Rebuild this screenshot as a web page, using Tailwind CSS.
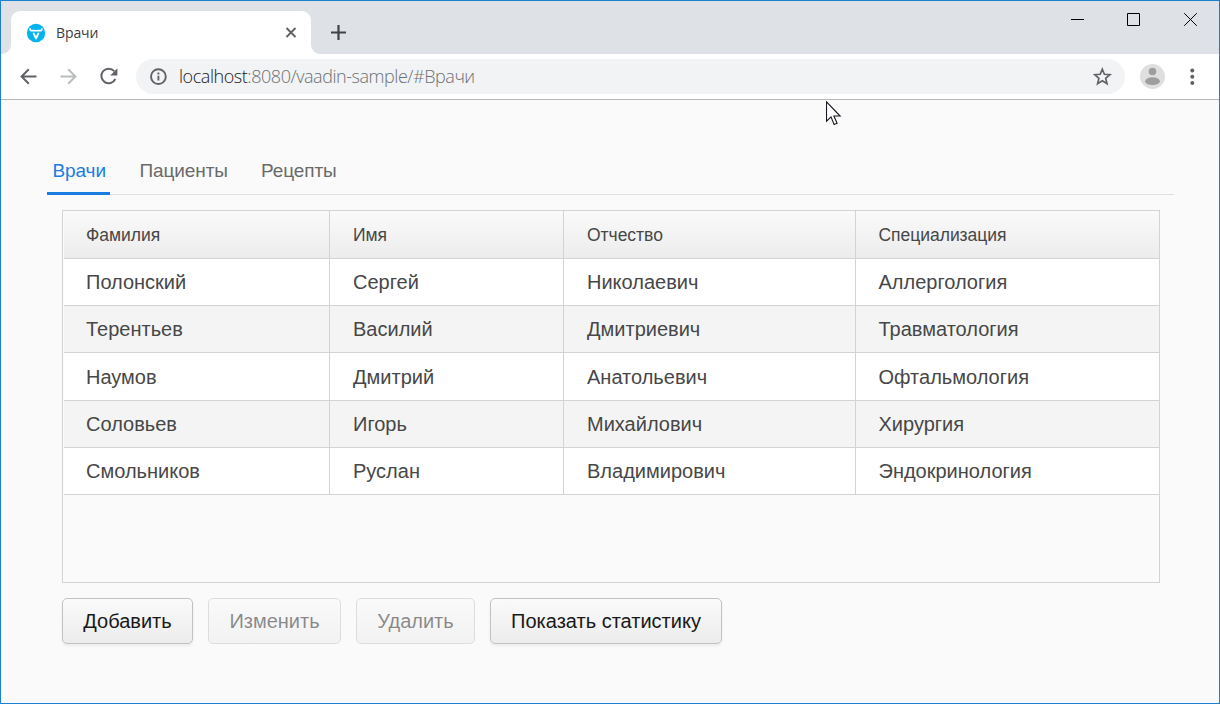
<!DOCTYPE html>
<html lang="ru">
<head>
<meta charset="utf-8">
<title>Врачи</title>
<script src="https://cdn.jsdelivr.net/npm/@tailwindcss/browser@4"></script>
</head>
<body class="w-[1220px] h-[704px] overflow-hidden">
<div class="relative flex flex-col w-[1220px] h-[704px] border border-[#1a80d0] bg-[#fafafa] font-['Liberation_Sans',Arial,sans-serif]">
  <!-- Tab strip -->
  <header class="flex h-[53px] bg-[#dee1e6] shrink-0">
    <div class="w-[10px] flex items-end bg-white"><div class="w-full h-full bg-[#dee1e6] rounded-br-[9px]"></div></div>
    <div class="w-[300px] mt-[10px] bg-white rounded-t-[9px] flex items-center pl-[15px] pr-[12px] font-['Open_Sans','Noto_Sans',sans-serif]">
      <svg class="w-5 h-5" viewBox="0 0 20 20"><circle cx="10" cy="10" r="9.200" fill="#00b4f0"/><path d="M4.200 5.200v1.400q0 1 1 1H8.800Q10 7.600 10 8.600Q10 7.600 11.200 7.600h3.600q1 0 1-1V5.200" fill="none" stroke="#fff" stroke-width="1.700"/><path d="M7.700 10.600l2.300 4.800 2.300-4.800" fill="none" stroke="#fff" stroke-width="2" stroke-linecap="round" stroke-linejoin="round"/></svg>
      <span class="ml-[10px] text-[14px] leading-5 tracking-[-0.1px] text-[#3c4043] font-normal grow">Врачи</span>
      <svg class="w-4 h-4" viewBox="0 0 16 16"><path d="M3.500 3l9 9M12.500 3l-9 9" stroke="#5f6368" stroke-width="1.900"/></svg>
    </div>
    <div class="grow bg-white"><div class="h-full bg-[#dee1e6] rounded-bl-[9px] flex">
      <svg class="w-4 h-4 ml-[20px] mt-[23px]" viewBox="0 0 16 16"><path d="M7.500 1v15M0 8.500h15" stroke="#3f4246" stroke-width="2.200"/></svg>
      <div class="grow"></div>
      <svg class="w-[13px] h-[13px] mt-3 mr-[43px]" viewBox="0 0 13 13"><path d="M0 6.500h13" stroke="#000"/></svg>
      <svg class="w-[13px] h-[13px] mt-3 mr-[44px]" viewBox="0 0 13 13"><path d="M.5.5h12v12H.5z" fill="none" stroke="#000"/></svg>
      <svg class="w-[13px] h-[13px] mt-3 mr-[22px]" viewBox="0 0 13 13"><path d="M.2.2l12.600 12.600M12.800.2L.2 12.800" stroke="#000" stroke-width="1"/></svg>
    </div></div>
  </header>
  <!-- Toolbar -->
  <nav class="h-[46px] shrink-0 bg-white border-b border-[#b5b6b5] flex items-center pl-4 pr-4">
    <svg class="w-6 h-6" viewBox="0 0 24 24" fill="none" stroke="#5f6368" stroke-width="2"><path d="M19.500 11.500H4.800M11.800 4.300L4.600 11.500l7.200 7.200"/></svg>
    <svg class="w-6 h-6 ml-4" viewBox="0 0 24 24" fill="none" stroke="#babcbe" stroke-width="2"><path d="M3.500 11.500h14.700M11.200 4.300l7.200 7.200-7.200 7.200"/></svg>
    <svg class="w-6 h-6 ml-4" viewBox="0 0 24 24"><path d="M17.200 6.200A7.300 7.300 0 1 0 18.300 14" fill="none" stroke="#5f6368" stroke-width="2"/><path d="M20.400 3.200v7.200h-7.200z" fill="#5f6368"/></svg>
    <div class="ml-[15px] w-[989px] h-[35px] bg-[#f1f3f4] rounded-full flex items-center pl-[13px] pr-[12px]">
      <svg class="w-[18px] h-[18px]" viewBox="0 0 18 18"><circle cx="9.400" cy="8.600" r="7.400" fill="none" stroke="#5f6368" stroke-width="1.900"/><path d="M9.400 7.700v4.900M9.400 4.500v1.900" stroke="#5f6368" stroke-width="1.900"/></svg>
      <span class="ml-[12px] -mt-px text-[18px] leading-6 tracking-[-0.45px] grow font-[350] text-[#6c7176] font-['Open_Sans','Noto_Sans',sans-serif]"><span class="text-[#18191d]">localhost</span>:8080/vaadin-sample/#Врачи</span>
      <svg class="w-5 h-5" viewBox="0 0 20 20"><path d="M9.300 2.200l2.100 5.100 5.500.4-4.200 3.600 1.300 5.400-4.700-2.900-4.700 2.900 1.300-5.400-4.200-3.600 5.500-.4z" fill="none" stroke="#5f6368" stroke-width="1.700"/></svg>
    </div>
    <svg class="w-[25px] h-[25px] ml-[15px]" viewBox="0 0 25 25"><circle cx="12.500" cy="12.500" r="12.500" fill="#dfdfdf"/><circle cx="12.500" cy="7.500" r="3.800" fill="#9e9e9e"/><ellipse cx="12.500" cy="17.200" rx="7.400" ry="3.900" fill="#9e9e9e"/></svg>
    <svg class="w-[6px] h-[18px] ml-[24px]" viewBox="0 0 6 18" fill="#5f6368"><circle cx="3.300" cy="2.400" r="2"/><circle cx="3.300" cy="8.700" r="2"/><circle cx="3.300" cy="14.900" r="2"/></svg>
  </nav>
  <main class="flex flex-col pl-[46px] pr-[45px] pt-[47px]">
    <div class="h-[48px] border-b border-[#dfdfdf] flex text-[19px] leading-[48px] text-[#6a6a6a] tracking-[-0.1px]">
      <div class="w-[63px] h-[48px] pl-[5.500px] text-[#197de1] border-b-3 border-[#197de1] shrink-0">Врачи</div>
      <div class="ml-[29.500px] w-[89px]">Пациенты</div>
      <div class="ml-[32.500px]">Рецепты</div>
    </div>
    <div class="ml-[15px] mt-[15px] w-[1098px] h-[373px] border border-[#d3d3d3] pl-px text-[20px] text-[#474747]">
      <div class="grid grid-cols-[266px_234px_292px_303px] grid-rows-[48px_47px_47px_48px_47px_47px] [&>div]:border-b [&>div]:border-r [&>div]:border-[#d3d3d3] [&>div]:flex [&>div]:items-center [&>div]:pl-[23px] [&>div:nth-child(4n+1)]:pl-[22px] [&>div:nth-child(4n)]:border-r-0 [&>div:nth-child(4n)]:pl-[22.500px] [&>div:nth-child(-n+4)]:text-[17.500px] [&>div:nth-child(-n+4)]:pt-[2px] [&>div:nth-child(-n+4)]:tracking-[-0.03px]">
        <div class="bg-linear-to-b from-[#fafafa] to-[#ececec]">Фамилия</div><div class="bg-linear-to-b from-[#fafafa] to-[#ececec]">Имя</div><div class="bg-linear-to-b from-[#fafafa] to-[#ececec]">Отчество</div><div class="bg-linear-to-b from-[#fafafa] to-[#ececec]">Специализация</div>
        <div class="bg-white">Полонский</div><div class="bg-white">Сергей</div><div class="bg-white">Николаевич</div><div class="bg-white">Аллергология</div>
        <div class="bg-[#f4f4f4]">Терентьев</div><div class="bg-[#f4f4f4]">Василий</div><div class="bg-[#f4f4f4]">Дмитриевич</div><div class="bg-[#f4f4f4]">Травматология</div>
        <div class="bg-white">Наумов</div><div class="bg-white">Дмитрий</div><div class="bg-white">Анатольевич</div><div class="bg-white">Офтальмология</div>
        <div class="bg-[#f4f4f4]">Соловьев</div><div class="bg-[#f4f4f4]">Игорь</div><div class="bg-[#f4f4f4]">Михайлович</div><div class="bg-[#f4f4f4]">Хирургия</div>
        <div class="bg-white">Смольников</div><div class="bg-white">Руслан</div><div class="bg-white">Владимирович</div><div class="bg-white">Эндокринология</div>
      </div>
    </div>
    <div class="ml-[15px] mt-[15px] flex gap-[15px] text-[20px] text-[#191919] [&>button]:h-[46px] [&>button]:rounded-[5px] [&>button]:border [&>button]:border-[#c2c2c2] [&>button]:bg-linear-to-b [&>button]:from-[#fafafa] [&>button]:to-[#ececec] [&>button]:shadow-[0_2px_3px_rgba(0,0,0,0.06)] [&>button:disabled]:opacity-50 [&>button:disabled]:shadow-none">
      <button class="w-[131px]">Добавить</button>
      <button class="w-[133px]" disabled>Изменить</button>
      <button class="w-[119px]" disabled>Удалить</button>
      <button class="w-[232px]">Показать статистику</button>
    </div>
  </main>
  <!-- Mouse pointer -->
  <svg class="absolute left-[825px] top-[100px] w-[16px] h-[25px]" viewBox="0 0 16 25"><path d="M.5.8v19.400l4.500-4.300 3.100 7.600 3-1.300-3.200-7.200h6.200z" fill="#fff" stroke="#16161e" stroke-width="1.100"/></svg>
</div>
</body>
</html>
